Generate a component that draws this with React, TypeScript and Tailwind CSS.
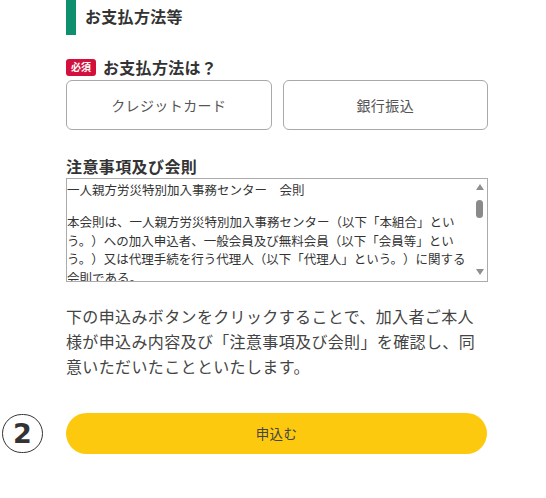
import React from "react";

const jp = "font-['Noto_Sans_CJK_JP','Noto_Sans',sans-serif]";

export default function App() {
  return (
    <div className={`w-[546px] h-[498px] bg-white text-[#333] ${jp} overflow-hidden [text-spacing-trim:space-all]`}>
      {/* section header */}
      <div className="flex h-[35px] pl-[66px]">
        <div className="w-[10px] h-full bg-[#0e8f6e]" />
        <div className="flex items-center pb-[4px] pl-[9px] text-[16px] leading-[24px] font-bold tracking-[0.3px] text-[#333]">
          お支払方法等
        </div>
      </div>

      <div className="pl-[66px] w-[488px]">
        {/* payment method */}
        <div className="mt-[22px] flex h-[20px] items-center gap-[7px]">
          <span className="flex h-[17px] w-[30px] items-center justify-center rounded-[3px] bg-[#d3103c] text-[10px] font-bold leading-none text-white">
            必須
          </span>
          <span className="text-[16px] font-bold leading-[20px] tracking-[0.3px] text-[#333]">
            お支払方法は？
          </span>
        </div>

        <div className="mt-[3px] grid grid-cols-2 gap-[11px]">
          <PayButton label="クレジットカード" />
          <PayButton label="銀行振込" />
        </div>

        {/* terms */}
        <h3 className="mt-[24px] text-[16px] font-bold leading-[24px] tracking-[0.4px] text-[#333]">
          注意事項及び会則
        </h3>
        <div className="flex h-[104px] border border-[#ababab] bg-white">
          <div className="flex-1 overflow-hidden pt-[2px] text-[12.5px] leading-[18.5px] text-[#333] whitespace-nowrap [text-spacing-trim:space-all]">
            <p>一人親方労災特別加入事務センター　会則</p>
            <div className="h-[13.5px]" />
            <p>
              本会則は、一人親方労災特別加入事務センター（以下「本組合」とい
              <br />
              う。）への加入申込者、一般会員及び無料会員（以下「会員等」とい
              <br />
              う。）又は代理手続を行う代理人（以下「代理人」という。）に関する
              <br />
              会則である。
            </p>
          </div>
          {/* scrollbar */}
          <div className="flex w-[15px] flex-col items-center py-[4px]">
            <svg width="8" height="6" viewBox="0 0 8 6" className="mt-[1px]">
              <path d="M4 0 L8 6 L0 6 Z" fill="#8f8f8f" />
            </svg>
            <div className="mt-[10px] h-[18px] w-[7px] rounded-full bg-[#8a8a8a]" />
            <div className="flex-1" />
            <svg width="8" height="6" viewBox="0 0 8 6" className="mb-[2px]">
              <path d="M0 0 L8 0 L4 6 Z" fill="#8f8f8f" />
            </svg>
          </div>
        </div>

        <p className="mt-[22px] text-[16px] leading-[25px] tracking-[0.36px] text-[#444]">
          下の申込みボタンをクリックすることで、加入者ご本人
          <br />
          様が申込み内容及び「注意事項及び会則」を確認し、同
          <br />
          意いただいたことといたします。
        </p>
      </div>

      {/* submit */}
      <div className="mt-[34px] flex items-center pl-[2px]">
        <div className="flex h-[39px] w-[41px] items-center justify-center rounded-full border-[1.5px] border-[#333]">
          <span className="font-['DejaVu_Sans',sans-serif] text-[27px] font-bold leading-none text-[#333]">2</span>
        </div>
        <button className="ml-[23px] h-[41px] w-[421px] rounded-full bg-[#fdc90f] text-[13.5px] leading-none text-[#444] tracking-[0.3px]">
          申込む
        </button>
      </div>
    </div>
  );
}

function PayButton({ label }: { label: string }) {
  return (
    <button className="flex h-[50px] items-center justify-center rounded-[6px] border border-[#a9a9a9] bg-white text-[14px] tracking-[0.4px] text-[#555]">
      {label}
    </button>
  );
}
